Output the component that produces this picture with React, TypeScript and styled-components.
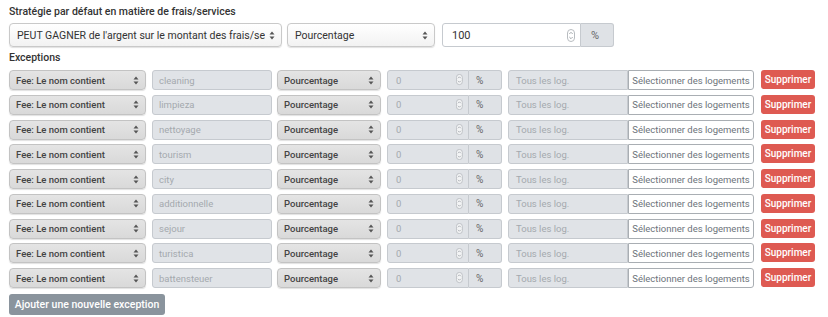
import React from "react";
import styled, { createGlobalStyle } from "styled-components";

const GlobalStyle = createGlobalStyle`
  html, body {
    margin: 0;
    padding: 0;
    background: #ffffff;
  }
  body {
    font-family: Roboto, "Liberation Sans", Arial, sans-serif;
    color: #333;
  }
`;

const Page = styled.div`
  padding: 5px 9px 0 9px;
`;

const Label = styled.div<{ $top?: number; $bottom?: number }>`
  font-size: 10.5px;
  font-weight: 500;
  line-height: 14px;
  color: #333;
  margin-top: ${(p) => p.$top ?? 0}px;
  margin-bottom: ${(p) => p.$bottom ?? 4}px;
`;

const TopRow = styled.div`
  display: flex;
  height: 24px;
`;

const SelectBox = styled.div<{ $w: number; $gap?: number; $disabled?: boolean }>`
  box-sizing: border-box;
  width: ${(p) => p.$w}px;
  margin-right: ${(p) => p.$gap ?? 0}px;
  height: 100%;
  display: flex;
  align-items: center;
  justify-content: space-between;
  padding: 0 6px 0 ${(p) => (p.$disabled ? 6 : 7)}px;
  border-radius: 4px;
  border: 1px solid ${(p) => (p.$disabled ? "#c3c3c3" : "#c9c9c9")};
  background: ${(p) =>
    p.$disabled
      ? "linear-gradient(#e4e4e4, #d9d9d9)"
      : "linear-gradient(#ffffff, #f2f2f2)"};
  box-shadow: 0 1px 1px rgba(0, 0, 0, 0.12);
  font-size: ${(p) => (p.$disabled ? "9.5px" : "10.5px")};
  font-weight: ${(p) => (p.$disabled ? 500 : 400)};
  color: ${(p) => (p.$disabled ? "#444" : "#333")};
  white-space: nowrap;
  overflow: hidden;
`;

const SelectText = styled.span`
  overflow: hidden;
  text-overflow: clip;
  flex: 1;
  margin-right: 4px;
`;

const Field = styled.div<{ $w: number; $white?: boolean; $radius?: string; $pad?: number }>`
  box-sizing: border-box;
  width: ${(p) => p.$w}px;
  height: 100%;
  display: flex;
  align-items: center;
  justify-content: space-between;
  padding: 0 5px 0 ${(p) => p.$pad ?? 6}px;
  border: 1px solid #c6cacf;
  border-radius: ${(p) => p.$radius ?? "3px"};
  background: ${(p) => (p.$white ? "#ffffff" : "#e0e3e7")};
  font-size: ${(p) => (p.$white ? "11px" : "9.5px")};
  color: ${(p) => (p.$white ? "#333" : "#a4a9ae")};
  white-space: nowrap;
`;

const Addon = styled.div<{ $w: number; $big?: boolean }>`
  box-sizing: border-box;
  width: ${(p) => p.$w}px;
  height: 100%;
  display: flex;
  align-items: center;
  padding-left: ${(p) => (p.$big ? 10 : 7)}px;
  border: 1px solid #c6cacf;
  border-left: none;
  border-radius: 0 3px 3px 0;
  background: #dfe2e6;
  font-size: ${(p) => (p.$big ? "11px" : "10px")};
  color: #666;
`;

const Group = styled.div<{ $gap?: number }>`
  display: flex;
  height: 100%;
  margin-right: ${(p) => p.$gap ?? 0}px;
`;

const Rows = styled.div`
  display: flex;
  flex-direction: column;
  gap: 4.75px;
`;

const Row = styled.div`
  display: flex;
  height: 20px;
`;

const PickButton = styled.div`
  box-sizing: border-box;
  width: 126px;
  height: 100%;
  display: flex;
  align-items: center;
  justify-content: center;
  border: 1px solid #a9aeb3;
  border-radius: 0 3px 3px 0;
  background: #ffffff;
  font-size: 9.5px;
  color: #6c737a;
  white-space: nowrap;
`;

const DeleteButton = styled.div`
  box-sizing: border-box;
  width: 54px;
  height: 19px;
  display: flex;
  align-items: center;
  justify-content: center;
  border-radius: 3px;
  background: #de5a52;
  font-size: 10px;
  font-weight: 500;
  color: #ffffff;
`;

const AddButton = styled.div`
  display: inline-flex;
  align-items: center;
  justify-content: center;
  box-sizing: border-box;
  width: 156px;
  height: 21px;
  margin-top: 6px;
  border-radius: 3px;
  background: #8a949d;
  font-size: 10.5px;
  font-weight: 500;
  color: #ffffff;
  white-space: nowrap;
`;

const Arrows = () => (
  <svg width="6" height="9" viewBox="0 0 6 9" style={{ flex: "none" }}>
    <path d="M3 0.5 L5.5 3.5 H0.5 Z" fill="#555" />
    <path d="M3 8.5 L5.5 5.5 H0.5 Z" fill="#555" />
  </svg>
);

const Spinner = ({ size = 1 }: { size?: number }) => (
  <svg
    width={8 * size}
    height={13 * size}
    viewBox="0 0 8 13"
    style={{ flex: "none" }}
  >
    <rect x="0.5" y="0.5" width="7" height="12" rx="3.5" fill="#fff" fillOpacity="0.6" stroke="#b8bcc0" />
    <path d="M2.3 5 L4 3.3 L5.7 5" fill="none" stroke="#9a9fa4" strokeWidth="0.9" />
    <path d="M2.3 8 L4 9.7 L5.7 8" fill="none" stroke="#9a9fa4" strokeWidth="0.9" />
  </svg>
);

const keywords = [
  "cleaning",
  "limpieza",
  "nettoyage",
  "tourism",
  "city",
  "additionnelle",
  "sejour",
  "turistica",
  "battensteuer",
];

export default function App() {
  return (
    <Page>
      <GlobalStyle />
      <Label>Stratégie par défaut en matière de frais/services</Label>
      <TopRow>
        <SelectBox $w={273} $gap={5}>
          <SelectText>PEUT GAGNER de l'argent sur le montant des frais/services</SelectText>
          <Arrows />
        </SelectBox>
        <SelectBox $w={148} $gap={7}>
          <SelectText>Pourcentage</SelectText>
          <Arrows />
        </SelectBox>
        <Group>
          <Field $w={139} $white $pad={9} $radius="3px 0 0 3px">
            <span>100</span>
            <Spinner />
          </Field>
          <Addon $w={33} $big>
            %
          </Addon>
        </Group>
      </TopRow>
      <Label $top={4} $bottom={5}>
        Exceptions
      </Label>
      <Rows>
        {keywords.map((k) => (
          <Row key={k}>
            <SelectBox $w={137} $gap={6} $disabled>
              <SelectText>Fee: Le nom contient</SelectText>
              <Arrows />
            </SelectBox>
            <Group $gap={5}>
              <Field $w={120}>{k}</Field>
            </Group>
            <SelectBox $w={104} $gap={6} $disabled>
              <SelectText>Pourcentage</SelectText>
              <Arrows />
            </SelectBox>
            <Group $gap={6}>
              <Field $w={82} $pad={8} $radius="3px 0 0 3px">
                <span>0</span>
                <Spinner size={0.85} />
              </Field>
              <Addon $w={33}>%</Addon>
            </Group>
            <Group $gap={7}>
              <Field $w={120} $pad={7} $radius="3px 0 0 3px">
                Tous les log.
              </Field>
              <PickButton>Sélectionner des logements</PickButton>
            </Group>
            <DeleteButton>Supprimer</DeleteButton>
          </Row>
        ))}
      </Rows>
      <AddButton>Ajouter une nouvelle exception</AddButton>
    </Page>
  );
}
